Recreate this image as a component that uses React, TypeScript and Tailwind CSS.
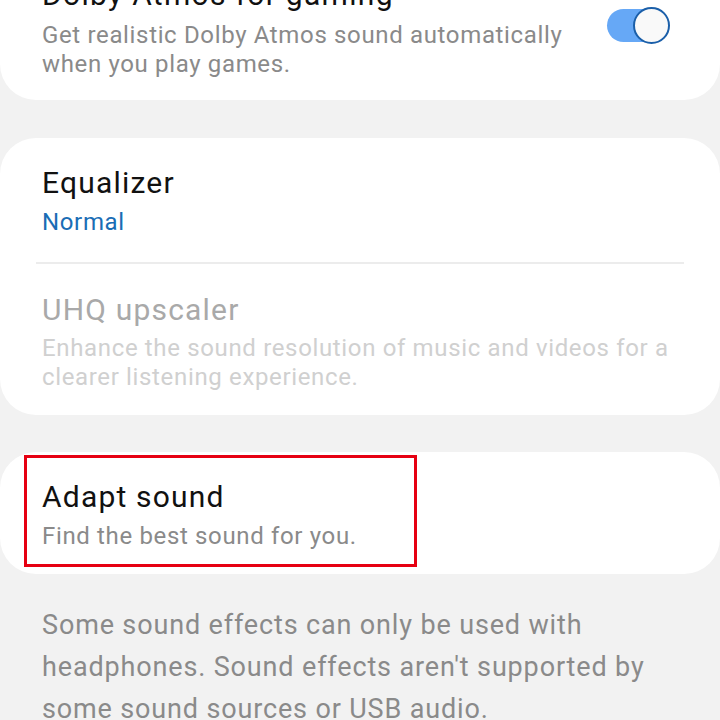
import React from "react";

export default function App() {
  return (
    <div
      className="w-[720px] h-[720px] overflow-hidden bg-[#f2f2f2]"
      style={{ fontFamily: "Roboto, 'Noto Sans', sans-serif" }}
    >
      <div className="-mt-[60px] flex flex-col">
        {/* Card 1 */}
        <div className="bg-white rounded-[36px] pt-[37px] pb-[21px] pl-[42px] pr-[50px] flex items-start justify-between">
          <div className="flex flex-col w-[540px]">
            <div className="text-[30px] leading-[36px] tracking-[1.3px] text-[#111111]">Dolby Atmos for gaming</div>
            <div className="mt-[8px] text-[24px] leading-[29px] tracking-[0.65px] text-[#8a8a8a]">
              Get realistic Dolby Atmos sound automatically when you play games.
            </div>
          </div>
          <div className="relative mt-[30px] w-[63px] h-[37px] flex items-center">
            <div className="w-[54px] h-[33px] rounded-full bg-[#66a8f6]" />
            <div className="absolute right-0 top-0 w-[37px] h-[37px] rounded-full bg-[#f9f9f9] border-[2.5px] border-[#1b5fa9]" />
          </div>
        </div>

        {/* Card 2 */}
        <div className="mt-[38px] bg-white rounded-[36px] pt-[27px] pb-[23px] flex flex-col">
          <div className="px-[42px] flex flex-col">
            <div className="text-[30px] leading-[36px] tracking-[1.2px] text-[#111111]">Equalizer</div>
            <div className="mt-[7px] text-[24px] leading-[29px] tracking-[0.65px] text-[#1a6db5]">Normal</div>
          </div>
          <div className="mt-[25px] mx-[36px] h-[2px] bg-[#ececec]" />
          <div className="mt-[28px] px-[42px] flex flex-col">
            <div className="text-[30px] leading-[36px] tracking-[1.2px] text-[#a9a9a9]">UHQ upscaler</div>
            <div className="mt-[6px] text-[24px] leading-[29px] tracking-[0.65px] text-[#d0d0d0]">
              Enhance the sound resolution of music and videos for a clearer listening experience.
            </div>
          </div>
        </div>

        {/* Card 3 */}
        <div className="relative mt-[37px] bg-white rounded-[36px] pt-[27px] pb-[23px] px-[42px] flex flex-col">
          <div className="text-[30px] leading-[36px] tracking-[1.2px] text-[#111111]">Adapt sound</div>
          <div className="mt-[7px] text-[24px] leading-[29px] tracking-[0.65px] text-[#8a8a8a]">Find the best sound for you.</div>
          <div className="absolute left-[24px] top-[3px] w-[393px] h-[112px] border-[3px] border-[#e60012]" />
        </div>

        {/* Footer */}
        <div className="mt-[30px] px-[42px] text-[27px] leading-[42px] tracking-[0.85px] text-[#8a8a8a]">
          Some sound effects can only be used with headphones. Sound effects aren't supported by some sound sources or USB audio.
        </div>
      </div>
    </div>
  );
}
